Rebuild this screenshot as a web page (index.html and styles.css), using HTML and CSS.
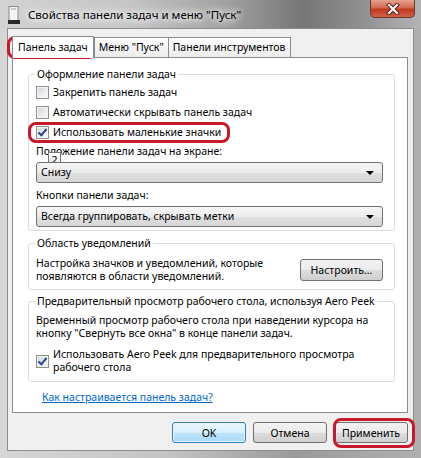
FILE: index.html
```html
<!DOCTYPE html>
<html lang="ru">
<head>
    <meta charset="UTF-8">
    <title>Свойства панели задач и меню "Пуск"</title>
    <link rel="stylesheet" href="styles.css">
</head>
<body>
    <div class="window">
        <div class="titlebar">
            <svg class="app-icon" width="12" height="18" viewBox="0 0 12 18">
                <rect x="1" y="0.5" width="9" height="14" fill="#f4f4f4" stroke="#8a8a8a"/>
                <rect x="3" y="2" width="5" height="2" fill="#c8c8c8"/>
                <rect x="0" y="14" width="12" height="4" fill="#2a2a2a"/>
            </svg>
            <span class="title">Свойства панели задач и меню "Пуск"</span>
            <div class="close-btn">
                <svg width="14" height="12" viewBox="0 0 14 12">
                    <path d="M3 2 L11 10 M11 2 L3 10" stroke="#5a1a10" stroke-width="4" stroke-linecap="square"/>
                    <path d="M3 2 L11 10 M11 2 L3 10" stroke="#ffffff" stroke-width="2.2" stroke-linecap="square"/>
                </svg>
            </div>
        </div>

        <div class="client">
            <div class="tabs">
                <div class="tab active">Панель задач</div>
                <div class="tab">Меню "Пуск"</div>
                <div class="tab">Панели инструментов</div>
            </div>

            <div class="panel">
                <fieldset class="group group-look">
                    <legend>Оформление панели задач</legend>
                    <div class="check"><span class="box"></span>Закрепить панель задач</div>
                    <div class="check"><span class="box"></span>Автоматически скрывать панель задач</div>
                    <div class="check"><span class="box checked"></span>Использовать маленькие значки</div>
                    <div class="field-label">Положение панели задач на экране:<span class="tip">2</span></div>
                    <div class="select">Снизу<span class="arrow"></span></div>
                    <div class="field-label second">Кнопки панели задач:</div>
                    <div class="select">Всегда группировать, скрывать метки<span class="arrow"></span></div>
                </fieldset>

                <fieldset class="group group-notify">
                    <legend>Область уведомлений</legend>
                    <div class="notify-row">
                        <p class="text">Настройка значков и уведомлений, которые<br>появляются в области уведомлений.</p>
                        <button class="btn btn-setup">Настроить...</button>
                    </div>
                </fieldset>

                <fieldset class="group group-peek">
                    <legend>Предварительный просмотр рабочего стола, используя Aero Peek</legend>
                    <p class="text">Временный просмотр рабочего стола при наведении курсора на<br>кнопку "Свернуть все окна" в конце панели задач.</p>
                    <div class="check two-line"><span class="box checked"></span><span>Использовать Aero Peek для предварительного просмотра<br>рабочего стола</span></div>
                </fieldset>

                <a class="help-link" href="#">Как настраивается панель задач?</a>
            </div>

            <div class="buttons">
                <button class="btn default">OK</button>
                <button class="btn">Отмена</button>
                <button class="btn">Применить</button>
            </div>
        </div>

        <div class="mark mark-tab"></div>
        <div class="mark mark-check"></div>
        <div class="mark mark-apply"></div>
    </div>
</body>
</html>
```

FILE: styles.css
```css
body {
    margin: 0;
    padding: 0;
    background: #ffffff;
    font-family: "Noto Sans", "Open Sans", sans-serif;
    font-size: 10.5px;
    color: #000;
}

.window {
    position: relative;
    width: 421px;
    height: 458px;
    background: linear-gradient(90deg, #d6d6d6 0%, #c4c4c4 40%, #9a9a9a 70%, #b0b0b0 100%);
    overflow: hidden;
}

.titlebar {
    height: 28px;
    display: flex;
    align-items: center;
    padding-left: 8px;
    background: linear-gradient(90deg, #d2d2d2 0%, #c6c6c6 30%, #9e9e9e 55%, #767676 72%, #8e8e8e 85%, #b4b4b4 100%);
}

.app-icon {
    margin-top: 2px;
}

.title {
    margin-left: 8px;
    font-size: 11.5px;
    text-shadow: 0 0 6px #fff, 0 0 10px #fff, 0 0 14px #f4f4f4;
}

.close-btn {
    position: absolute;
    left: 370px;
    top: 0;
    width: 43px;
    height: 17px;
    display: flex;
    align-items: center;
    justify-content: center;
    border: 1px solid #6b3528;
    border-top: none;
    border-radius: 0 0 5px 5px;
    background: linear-gradient(#e7a28f 0%, #d16a50 45%, #c0391c 55%, #d5614a 100%);
}

.client {
    margin: 0 7px;
    height: 423px;
    box-sizing: border-box;
    background: #f0f0f0;
    border: 1px solid #8d8d8d;
    padding: 6px 5px 0 4px;
}

.tabs {
    display: flex;
    align-items: flex-end;
    position: relative;
    z-index: 1;
}

.tab {
    height: 19px;
    line-height: 19px;
    padding: 0 4px;
    margin-top: 2px;
    margin-left: -1px;
    border: 1px solid #898c95;
    border-bottom: none;
    background: linear-gradient(#fdfdfd, #ececec);
    white-space: nowrap;
}

.tab.active {
    height: 21px;
    line-height: 21px;
    margin-top: 0;
    margin-left: 0;
    margin-right: 1px;
    padding: 0 5px;
    background: #fff;
    margin-bottom: -1px;
}

.panel {
    height: 356px;
    box-sizing: border-box;
    background: #fff;
    border: 1px solid #898c95;
    padding: 9px 12px 0 15px;
}

.group {
    margin: 0;
    border: 1px solid #d5dfe5;
    border-radius: 3px;
    padding: 0 11px 3px 7px;
}

.group legend {
    padding: 0 2px;
    margin-left: -1px;
    line-height: 15px;
    white-space: nowrap;
}

.group-notify {
    margin-top: 5px;
    padding: 6px 11px 6px 7px;
}

.group-peek {
    margin-top: 4px;
    padding: 5px 11px 7px 7px;
}

.check {
    height: 20px;
    display: flex;
    align-items: center;
    white-space: nowrap;
}

.box {
    width: 11px;
    height: 11px;
    border: 1px solid #8e8f8f;
    margin-right: 4px;
    background: linear-gradient(135deg, #d2d5da 0%, #eceef0 60%, #fafafa 100%);
    box-shadow: inset 0 0 0 1px #f4f4f4;
    position: relative;
    flex: none;
}

.box.checked::after {
    content: "";
    position: absolute;
    left: 3px;
    top: 0;
    width: 3px;
    height: 7px;
    border: solid #2d4690;
    border-width: 0 2px 2px 0;
    transform: rotate(40deg);
}

.field-label {
    height: 18px;
    line-height: 18px;
    position: relative;
}

.field-label.second {
    margin-top: 3px;
}

.tip {
    position: absolute;
    left: 12px;
    top: 10px;
    width: 11px;
    height: 14px;
    line-height: 14px;
    text-align: center;
    font-size: 11px;
    border: 1px solid #767676;
    background: linear-gradient(#ffffff, #e4e5f0);
}

.select {
    position: relative;
    height: 19px;
    line-height: 19px;
    margin-top: 2px;
    padding-left: 4px;
    border: 1px solid #707070;
    border-radius: 3px;
    background: linear-gradient(#f6f6f6, #ececec 50%, #e0e0e0 51%, #d6d6d6);
}

.arrow {
    position: absolute;
    right: 8px;
    top: 8px;
    border-left: 4px solid transparent;
    border-right: 4px solid transparent;
    border-top: 4px solid #000;
}

.text {
    margin: 0;
    line-height: 13px;
    white-space: nowrap;
}

.notify-row {
    display: flex;
    align-items: center;
    justify-content: space-between;
}

.btn {
    font-family: inherit;
    font-size: 10.5px;
    color: #000;
    height: 21px;
    padding: 0;
    border: 1px solid #707070;
    border-radius: 3px;
    background: linear-gradient(#f2f2f2, #ebebeb 50%, #dddddd 51%, #cfcfcf);
}

.btn-setup {
    width: 83px;
    height: 22px;
}

.check.two-line {
    height: auto;
    margin-top: 8px;
    line-height: 13px;
}

.help-link {
    display: inline-block;
    margin-top: 9px;
    margin-left: 14px;
    color: #0066cc;
    line-height: 13px;
}

.buttons {
    display: flex;
    justify-content: flex-end;
    gap: 7px;
    margin-top: 9px;
}

.buttons .btn {
    width: 74px;
    height: 21px;
}

.btn.default {
    border-color: #3c7fb1;
    background: linear-gradient(#eaf6fd, #d9f0fc 50%, #bee6fd 51%, #a7d9f5);
    box-shadow: inset 0 0 0 1px #e6f4fc;
}

.mark {
    position: absolute;
    border: 3px solid #c8182c;
    border-radius: 8px;
    pointer-events: none;
}

.mark-tab {
    left: 7px;
    top: 36px;
    width: 84px;
    height: 17px;
}

.mark-check {
    left: 28px;
    top: 122px;
    width: 196px;
    height: 15px;
}

.mark-apply {
    left: 333px;
    top: 418px;
    width: 76px;
    height: 24px;
}
```
